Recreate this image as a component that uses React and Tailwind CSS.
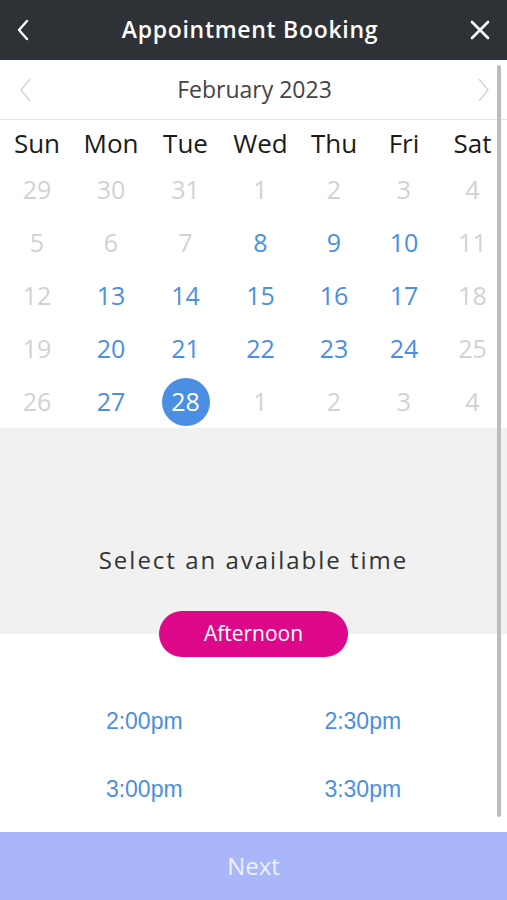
import React from "react";

const cols = "grid grid-cols-[74px_74px_75px_75px_72px_68px_69px]";

const weeks = [
  [["29", 0], ["30", 0], ["31", 0], ["1", 0], ["2", 0], ["3", 0], ["4", 0]],
  [["5", 0], ["6", 0], ["7", 0], ["8", 1], ["9", 1], ["10", 1], ["11", 0]],
  [["12", 0], ["13", 1], ["14", 1], ["15", 1], ["16", 1], ["17", 1], ["18", 0]],
  [["19", 0], ["20", 1], ["21", 1], ["22", 1], ["23", 1], ["24", 1], ["25", 0]],
  [["26", 0], ["27", 1], ["28", 2], ["1", 0], ["2", 0], ["3", 0], ["4", 0]],
];

export default function App() {
  return (
    <div className="relative w-[507px] h-[900px] overflow-hidden bg-white flex flex-col" style={{ fontFamily: '"Open Sans", "Noto Sans", sans-serif' }}>
      {/* Header */}
      <div className="h-[60px] bg-[#2e3136] flex items-center justify-between px-[12px] shrink-0">
        <svg width="18" height="24" viewBox="0 0 18 24" className="ml-[2px]">
          <path d="M13 3 L5 12 L13 21" fill="none" stroke="white" strokeWidth="2.4" strokeLinecap="round" strokeLinejoin="round" />
        </svg>
        <div className="text-white text-[23px] font-semibold tracking-[0.7px] -mt-[2px]" style={{ fontFamily: '"Open Sans", sans-serif' }}>
          Appointment Booking
        </div>
        <svg width="24" height="24" viewBox="0 0 24 24" className="mr-[3px]">
          <path d="M4 4 L20 20 M20 4 L4 20" fill="none" stroke="white" strokeWidth="2.6" strokeLinecap="round" />
        </svg>
      </div>

      {/* Month */}
      <div className="h-[60px] border-b border-[#e6e6e6] flex items-center justify-between px-[18px] shrink-0">
        <svg width="14" height="26" viewBox="0 0 14 26">
          <path d="M12 2 L3 13 L12 24" fill="none" stroke="#d6d6d6" strokeWidth="1.5" />
        </svg>
        <div className="text-[23px] text-[#444]">February 2023</div>
        <svg width="14" height="26" viewBox="0 0 14 26" className="mr-[-2px]">
          <path d="M2 2 L11 13 L2 24" fill="none" stroke="#d6d6d6" strokeWidth="1.5" />
        </svg>
      </div>

      {/* Weekdays */}
      <div className={`${cols} h-[43px] items-center pt-[3px] text-[26px] text-[#1a1a1a] shrink-0`}>
        {["Sun", "Mon", "Tue", "Wed", "Thu", "Fri", "Sat"].map((d) => (
          <div key={d} className="text-center">{d}</div>
        ))}
      </div>

      {/* Dates */}
      <div className="shrink-0">
        {weeks.map((w, i) => (
          <div key={i} className={`${cols} h-[53px] items-center`}>
            {w.map(([n, s], j) => (
              <div key={j} className="flex justify-center">
                {s === 2 ? (
                  <div className="w-[48px] h-[48px] rounded-full bg-[#4a8fe2] text-white text-[25px] flex items-center justify-center">{n}</div>
                ) : (
                  <div className={`text-[25px] ${s === 1 ? "text-[#4a8fe2]" : "text-[#d2d2d2]"}`}>{n}</div>
                )}
              </div>
            ))}
          </div>
        ))}
      </div>

      {/* Select time */}
      <div className="h-[206px] bg-[#f1f1f1] flex flex-col items-center justify-end shrink-0">
        <div className="text-[24px] text-[#333] tracking-[2px] leading-[32px] mb-[35px]">Select an available time</div>
        <div className="relative z-10 -mb-[23px] w-[189px] h-[46px] rounded-full bg-[#dd0889] text-white text-[21px] flex items-center justify-center">
          Afternoon
        </div>
      </div>

      {/* Times */}
      <div className="flex-1 pt-[53px] px-[35px]" style={{ fontFamily: '"Liberation Sans", Arial, sans-serif' }}>
        <div className="grid grid-cols-2">
          {["2:00pm", "2:30pm", "3:00pm", "3:30pm"].map((t) => (
            <div key={t} className="h-[68px] flex items-center justify-center text-[23px] text-[#4a8fe2]">{t}</div>
          ))}
        </div>
      </div>

      {/* Next */}
      <div className="h-[68px] bg-[#a9b6f9] flex items-center justify-center text-[24px] text-[#eef1ff] shrink-0">Next</div>

      {/* Scrollbar overlay */}
      <div className="absolute left-[497px] top-[65px] w-[4px] h-[752px] rounded-full bg-[#bdbdbd]" />
    </div>
  );
}
